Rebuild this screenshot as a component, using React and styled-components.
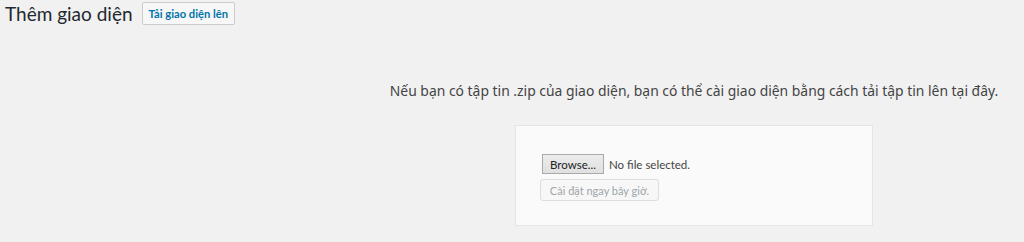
import React from "react";
import styled, { createGlobalStyle } from "styled-components";

const GlobalStyle = createGlobalStyle`
  html, body {
    margin: 0;
    padding: 0;
    background: #f1f1f1;
  }
  body {
    font-family: Lato, "Noto Sans", sans-serif;
    color: #444;
    font-size: 13px;
  }
`;

const Wrap = styled.div`
  padding: 0 0 0 5px;
`;

const TitleRow = styled.div`
  display: flex;
  align-items: center;
  gap: 9px;
  height: 27px;
`;

const Title = styled.h1`
  margin: 0;
  font-family: Lato, sans-serif;
  font-size: 19px;
  font-weight: 400;
  color: #23282d;
  line-height: 28px;
`;

const ActionButton = styled.a`
  display: inline-flex;
  align-items: center;
  height: 23px;
  padding: 0 6px;
  box-sizing: border-box;
  border: 1px solid #ccc;
  border-radius: 2px;
  background: #f7f7f7;
  color: #0073aa;
  font-size: 11.2px;
  font-weight: 700;
  text-decoration: none;
`;

const UploadSection = styled.div`
  padding-left: 359px;
  padding-top: 53px;
  text-align: center;
`;

const Description = styled.p`
  margin: 0;
  font-family: "Noto Sans", sans-serif;
  font-size: 13.9px;
  color: #444;
  line-height: 22px;
`;

const UploadForm = styled.form`
  width: 358px;
  box-sizing: border-box;
  margin: 23px auto 0;
  padding: 28px 24px 24px;
  background: #fafafa;
  border: 1px solid #e5e5e5;
  text-align: left;
  display: flex;
  flex-direction: column;
  align-items: flex-start;
  gap: 5px;
`;

const FileRow = styled.div`
  display: flex;
  align-items: center;
  gap: 5px;
  margin-left: 2px;
`;

const BrowseButton = styled.span`
  display: inline-flex;
  align-items: center;
  justify-content: center;
  width: 62px;
  height: 20px;
  box-sizing: border-box;
  background: linear-gradient(#ececec, #e0e0e0);
  border: 1px solid #a9a9a9;
  color: #222;
  font-size: 11.5px;
`;

const FileStatus = styled.span`
  font-size: 11.5px;
  color: #444;
`;

const InstallButton = styled.button`
  height: 22px;
  width: 119px;
  padding: 0;
  box-sizing: border-box;
  border: 1px solid #ddd;
  border-radius: 3px;
  background: #f7f7f7;
  color: #a0a5aa;
  font-family: inherit;
  font-size: 11px;
  cursor: default;
`;

export default function App() {
  return (
    <>
      <GlobalStyle />
      <Wrap>
        <TitleRow>
          <Title>Thêm giao diện</Title>
          <ActionButton href="#">Tải giao diện lên</ActionButton>
        </TitleRow>
        <UploadSection>
          <Description>
            Nếu bạn có tập tin .zip của giao diện, bạn có thể cài giao diện bằng cách tải tập tin lên tại đây.
          </Description>
          <UploadForm onSubmit={(e) => e.preventDefault()}>
            <FileRow>
              <BrowseButton>Browse...</BrowseButton>
              <FileStatus>No file selected.</FileStatus>
            </FileRow>
            <InstallButton type="submit" disabled>
              Cài đặt ngay bây giờ.
            </InstallButton>
          </UploadForm>
        </UploadSection>
      </Wrap>
    </>
  );
}
